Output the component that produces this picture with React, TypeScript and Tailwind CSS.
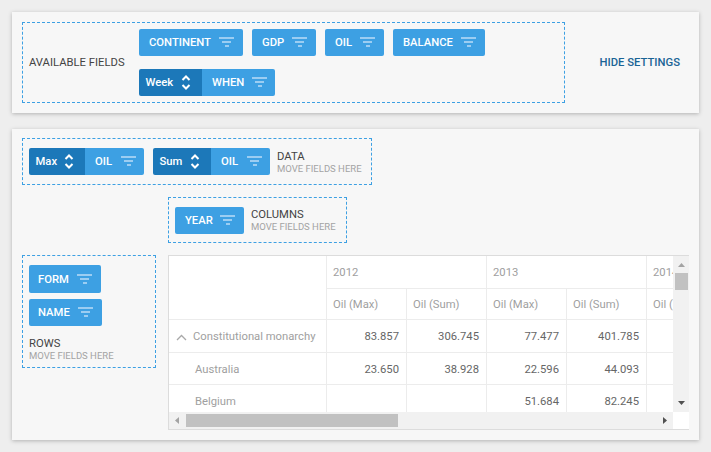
import React from "react";

function FilterIcon({ className = "" }: { className?: string }) {
  return (
    <svg width="16" height="11" viewBox="0 0 16 11" className={`shrink-0 ${className}`}>
      <rect x="0" y="0" width="15" height="2" fill="#9bcdf2" />
      <rect x="3" y="4" width="9" height="2" fill="#9bcdf2" />
      <rect x="6" y="8" width="4" height="2" fill="#9bcdf2" />
    </svg>
  );
}

function Sorter() {
  return (
    <svg width="12" height="17" viewBox="0 0 12 17" fill="none" stroke="#fff" strokeWidth="2" className="shrink-0">
      <path d="M2.5 6 L6 2.5 L9.5 6" />
      <path d="M2.5 11 L6 14.5 L9.5 11" />
    </svg>
  );
}

function Chip({ label, w, h = "h-[27px]", pl = "pl-[10px]" }: { label: string; w: string; h?: string; pl?: string }) {
  return (
    <div className={`flex items-center justify-between ${h} ${w} ${pl} pr-[8px] bg-[#3da0e3] rounded-[2px] text-white text-[11.25px] font-medium`}>
      <span className="mt-[2px]">{label}</span>
      <FilterIcon />
    </div>
  );
}

function ComboChip({ agg, aggW, label, w }: { agg: string; aggW: string; label: string; w: string }) {
  return (
    <div className="flex h-[27px] text-white text-[11.25px] font-medium">
      <div className={`flex items-center justify-between ${aggW} pl-[6.5px] pr-[10px] bg-[#1c78b9] rounded-l-[2px]`}>
        <span className="mt-[2px]">{agg}</span>
        <Sorter />
      </div>
      <div className={`flex items-center justify-between ${w} pl-[10px] pr-[7px] bg-[#3da0e3] rounded-r-[2px]`}>
        <span className="mt-[2px]">{label}</span>
        <FilterIcon />
      </div>
    </div>
  );
}

function Caption({ title }: { title: string }) {
  return (
    <div className="flex flex-col">
      <span className="text-[11.25px] leading-[13px] text-[#444]">{title}</span>
      <span className="text-[9.5px] leading-[12px] text-[#a3a3a3]">MOVE FIELDS HERE</span>
    </div>
  );
}

const cols = "grid grid-cols-[158px_80px_80px_80px_80px_80px]";

function Cell({ children, className = "" }: { children?: React.ReactNode; className?: string }) {
  return (
    <div className={`border-r border-b border-[#ececec] text-[11.25px] flex items-center overflow-hidden whitespace-nowrap ${className}`}>
      {children}
    </div>
  );
}

const rows: [string, string, string, string, string, string][] = [
  ["Constitutional monarchy", "83.857", "306.745", "77.477", "401.785", "h-[33px] pt-[3px]"],
  ["Australia", "23.650", "38.928", "22.596", "44.093", "h-[32px] pt-[4px]"],
  ["Belgium", "", "", "51.684", "82.245", "h-[32px] pt-[4px]"],
];

export default function App() {
  return (
    <div className="w-[711px] h-[452px] bg-[#eeeeee] p-3 flex flex-col gap-4 overflow-hidden" style={{ fontFamily: "Roboto, sans-serif" }}>
      <div className="h-[101px] bg-[#f7f7f7] shadow-[0_1px_4px_rgba(0,0,0,0.25)] p-[10px] flex">
        <div className="w-[543px] h-[81px] border border-dashed border-[#3da0e3] pl-[6px] flex items-center">
          <div className="w-[110px] pt-[2px] text-[11.25px] text-[#444]">AVAILABLE FIELDS</div>
          <div className="flex flex-col gap-[13px]">
            <div className="flex gap-[9px]">
              <Chip label="CONTINENT" w="w-[104px]" />
              <Chip label="GDP" w="w-[64px]" />
              <Chip label="OIL" w="w-[59px]" />
              <Chip label="BALANCE" w="w-[92px]" />
            </div>
            <ComboChip agg="Week" aggW="w-[63px]" label="WHEN" w="w-[73px]" />
          </div>
        </div>
        <div className="flex-1 flex items-center justify-end pr-[9px] pt-[2px] text-[11.25px] font-medium text-[#1a6496]">HIDE SETTINGS</div>
      </div>

      <div className="h-[311px] bg-[#f7f7f7] shadow-[0_1px_4px_rgba(0,0,0,0.25)] pt-[9px] px-[10px] grid grid-cols-[146px_521px] content-start">
        <div className="col-span-2 w-[350px] h-[47px] border border-dashed border-[#3da0e3] flex items-center pl-[6px] gap-[9px]">
          <ComboChip agg="Max" aggW="w-[56px]" label="OIL" w="w-[59px]" />
          <ComboChip agg="Sum" aggW="w-[58px]" label="OIL" w="w-[59px]" />
          <div className="-ml-[2px] pt-[1px]"><Caption title="DATA" /></div>
        </div>
        <div className="h-[70px]" />
        <div className="w-[179px] h-[46px] mt-[12px] border border-dashed border-[#3da0e3] flex items-center pl-[6px] gap-[7px]">
          <Chip label="YEAR" w="w-[69px]" />
          <Caption title="COLUMNS" />
        </div>
        <div className="w-[134px] h-[113px] border border-dashed border-[#3da0e3] pl-[6px] pt-[9px]">
          <div className="flex flex-col gap-[6px]">
            <Chip label="FORM" w="w-[72px]" h="h-[28px]" pl="pl-[9px]" />
            <Chip label="NAME" w="w-[73px]" pl="pl-[9px]" />
          </div>
          <div className="mt-[11px]"><Caption title="ROWS" /></div>
        </div>
        <div className="w-[521px] h-[175px] border-l border-t border-b border-[#dcdcdc] bg-white flex flex-col">
          <div className="flex h-[156px]">
            <div className="w-[504px] overflow-hidden">
              <div className={`${cols} w-[558px]`}>
                <div className="row-span-2 h-[64px] border-r border-b border-[#ececec]" />
                <Cell className="col-span-2 h-[33px] pl-[6px] pt-[3px] text-[#a0a0a0]">2012</Cell>
                <Cell className="col-span-2 h-[33px] pl-[6px] pt-[3px] text-[#a0a0a0]">2013</Cell>
                <Cell className="h-[33px] pl-[6px] pt-[3px] text-[#a0a0a0]">2014</Cell>
                {["Oil (Max)", "Oil (Sum)", "Oil (Max)", "Oil (Sum)", "Oil (Max)"].map((t, i) => (
                  <Cell key={i} className="h-[31px] pl-[6px] pt-[3px] text-[#a0a0a0]">{t}</Cell>
                ))}
                {rows.map((r, i) => (
                  <React.Fragment key={i}>
                    <Cell className={`${r[5]} text-[#a0a0a0] ${i === 0 ? "pl-[7px] gap-[6px]" : "pl-[26px]"}`}>
                      {i === 0 && (
                        <svg width="11" height="7" viewBox="0 0 11 7" fill="none" stroke="#a8a8a8" strokeWidth="1.3" className="shrink-0">
                          <path d="M1 6 L5.5 1.5 L10 6" />
                        </svg>
                      )}
                      <span>{r[0]}</span>
                    </Cell>
                    {[r[1], r[2], r[3], r[4]].map((v, j) => (
                      <Cell key={j} className={`${r[5]} justify-end pr-[7px] text-[#666]`}>{v}</Cell>
                    ))}
                    <Cell className={r[5]} />
                  </React.Fragment>
                ))}
              </div>
            </div>
            <div className="w-[16px] bg-[#f1f1f1] flex flex-col items-center">
              <svg width="9" height="17" viewBox="0 0 9 17" className="shrink-0"><path d="M1 11 L4.5 7 L8 11 Z" fill="#a3a3a3" /></svg>
              <div className="w-[13px] h-[17px] bg-[#c1c1c1] shrink-0 ml-[1px]" />
              <div className="flex-1" />
              <svg width="9" height="17" viewBox="0 0 9 17" className="shrink-0"><path d="M1 6 L8 6 L4.5 10 Z" fill="#505050" /></svg>
            </div>
          </div>
          <div className="flex h-[17px]">
            <div className="w-[504px] bg-[#f1f1f1] flex items-center">
              <svg width="17" height="17" viewBox="0 0 17 17" className="shrink-0"><path d="M10 5 L6 8.5 L10 12 Z" fill="#a3a3a3" /></svg>
              <div className="w-[212px] h-[13px] bg-[#c1c1c1]" />
              <div className="flex-1" />
              <svg width="17" height="17" viewBox="0 0 17 17" className="shrink-0"><path d="M7 5 L11 8.5 L7 12 Z" fill="#505050" /></svg>
            </div>
            <div className="flex-1 bg-white" />
          </div>
        </div>
      </div>
    </div>
  );
}
